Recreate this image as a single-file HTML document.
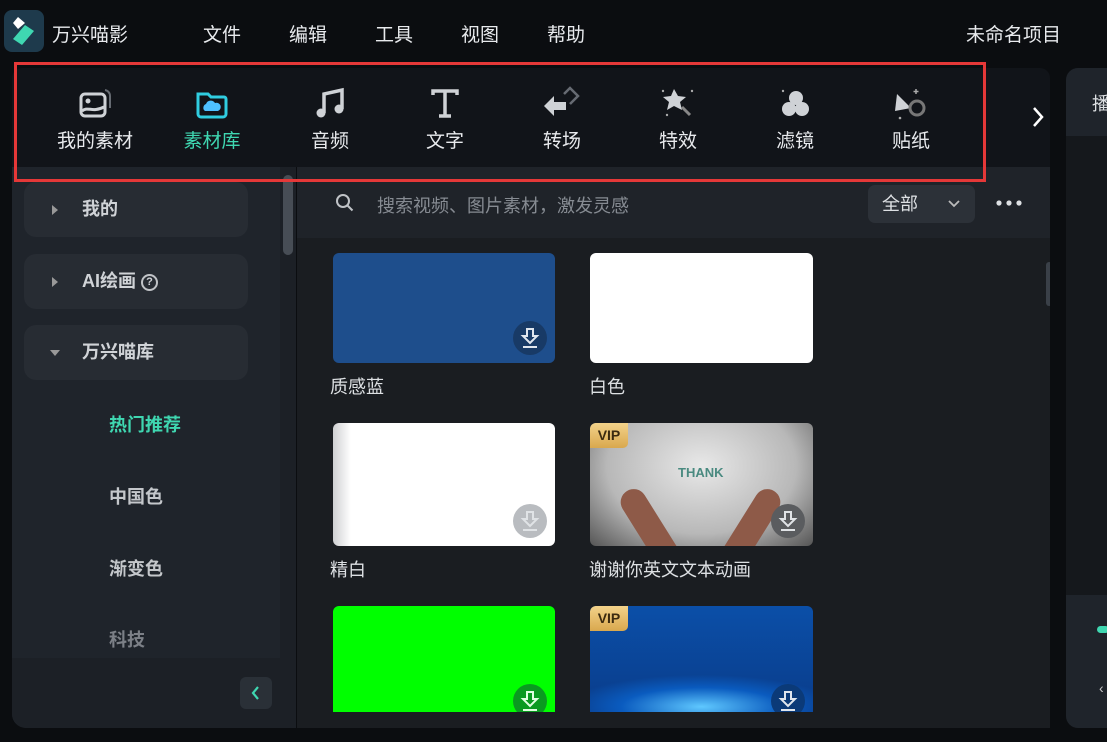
<!DOCTYPE html>
<html><head><meta charset="utf-8"><style>
*{margin:0;padding:0;box-sizing:border-box}
body{width:1107px;height:742px;background:#0b0d10;font-family:"Liberation Sans","Noto Sans CJK SC",sans-serif;color:#e6e8eb;position:relative;overflow:hidden}
.a{position:absolute}
.menu{font-size:19px;top:20px;color:#e8eaed}
.tb{top:68px;left:12px;width:1038px;height:99px;background:#111419;border-radius:10px 10px 0 0}
.tool{position:absolute;top:86px;width:100px;margin-left:-50px;text-align:center;font-size:19px;color:#e8eaed}
.tool svg{display:block;margin:0 auto 6px;height:34px}
.side{left:12px;top:167px;width:284px;height:561px;background:#1f242b;border-radius:0 0 0 14px;overflow:hidden}
.item{position:absolute;left:12px;width:224px;height:55px;background:#272c33;border-radius:12px;font-size:18px;font-weight:bold;color:#d0d3d7;padding-left:58px;line-height:55px}
.tri{position:absolute;left:28px;top:23px;width:0;height:0}
.sub{position:absolute;left:97px;font-size:18px;font-weight:bold;color:#c4c7cb}
.content{left:297px;top:167px;width:753px;height:561px;background:#1a1d21;overflow:hidden}
.th{position:absolute;border-radius:6px;overflow:hidden}
.lab{position:absolute;font-size:18px;color:#dde0e3}
.dl{position:absolute;right:8px;bottom:8px;width:34px;height:34px;border-radius:50%;background:rgba(20,40,70,.75)}
.dl svg{display:block;margin:6px auto}
.vip{position:absolute;left:0;top:0;width:38px;height:25px;background:linear-gradient(#f3d28a,#d9a84e);border-radius:5px 0 5px 0;color:#3b2a10;font-weight:bold;font-size:14px;text-align:center;line-height:25px}
</style></head><body>
<div class="a" style="left:4px;top:10px;width:40px;height:42px;background:#1e3a4c;border-radius:8px"></div>
<svg class="a" style="left:8px;top:13px" width="32" height="36" viewBox="0 0 32 36"><path d="M10 4l7 6-7 6-5-6z" fill="#fff"/><path d="M5 26l12-14 9 6-12 14z" fill="#3fd7b1"/></svg>
<div class="a menu" style="left:52px">万兴喵影</div>
<div class="a menu" style="left:203px">文件</div>
<div class="a menu" style="left:289px">编辑</div>
<div class="a menu" style="left:375px">工具</div>
<div class="a menu" style="left:461px">视图</div>
<div class="a menu" style="left:547px">帮助</div>
<div class="a menu" style="left:966px">未命名项目</div>

<div class="a tb"></div>
<div class="tool" style="left:95px"><svg width="36" viewBox="0 0 36 34"><rect x="4" y="8" width="24" height="22" rx="4" fill="none" stroke="#cfd2d6" stroke-width="3"/><circle cx="11" cy="15" r="2.5" fill="#cfd2d6"/><path d="M5 25c6-5 10 2 22-4" stroke="#cfd2d6" stroke-width="3" fill="none"/><path d="M28 4a6 6 0 0 1 5 6v12" stroke="#666b72" stroke-width="2" fill="none"/></svg>我的素材</div>
<div class="tool" style="left:212px;color:#3fd7b1"><svg width="36" viewBox="0 0 36 34"><path d="M4 8h10l3 3h13a2 2 0 0 1 2 2v15a3 3 0 0 1-3 3H7a3 3 0 0 1-3-3z" fill="none" stroke="#30cde0" stroke-width="3"/><path d="M11 25a4 4 0 0 1 1-7 5 5 0 0 1 9-1 4 4 0 0 1 3 8z" fill="#4ec0ff"/></svg>素材库</div>
<div class="tool" style="left:330px"><svg width="36" viewBox="0 0 36 34"><path d="M12 27V8l18-4v19" stroke="#cfd2d6" stroke-width="3.5" fill="none"/><circle cx="9" cy="27" r="4.5" fill="#cfd2d6"/><circle cx="27" cy="23" r="4.5" fill="#cfd2d6"/></svg>音频</div>
<div class="tool" style="left:445px"><svg width="36" viewBox="0 0 36 34"><path d="M6 9V5h24v4M18 5v25M12 30h12" stroke="#cfd2d6" stroke-width="3.5" fill="none"/></svg>文字</div>
<div class="tool" style="left:562px"><svg width="40" viewBox="0 0 40 34"><path d="M22 8l6-6 8 8-8 8" stroke="#666b72" stroke-width="2.5" fill="none"/><path d="M2 20l10-10v6h12v8H12v6z" fill="#cfd2d6"/></svg>转场</div>
<div class="tool" style="left:678px"><svg width="40" viewBox="0 0 40 34"><path d="M16 3l4 7 8 1-6 5 2 8-8-4-7 4 2-8-6-5 8-1z" fill="#cfd2d6"/><path d="M24 21l8 8" stroke="#888" stroke-width="3"/><circle cx="5" cy="5" r="1.2" fill="#aaa"/><circle cx="34" cy="5" r="1.2" fill="#aaa"/><circle cx="9" cy="29" r="1.2" fill="#aaa"/></svg>特效</div>
<div class="tool" style="left:795px"><svg width="36" viewBox="0 0 36 34"><circle cx="19" cy="12" r="7" fill="#cfd2d6"/><circle cx="12" cy="23" r="7" fill="#cfd2d6"/><circle cx="25" cy="23" r="7" fill="#cfd2d6"/><circle cx="6" cy="5" r="1.2" fill="#aaa"/></svg>滤镜</div>
<div class="tool" style="left:911px"><svg width="40" viewBox="0 0 40 34"><path d="M6 8l14 14-16 3z" fill="#cfd2d6"/><circle cx="26" cy="22" r="7" stroke="#777" stroke-width="3" fill="none"/><path d="M25 3v5M22.5 5.5h5" stroke="#aaa" stroke-width="1.5"/><circle cx="9" cy="32" r="1.3" fill="#aaa"/></svg>贴纸</div>
<svg class="a" style="left:1032px;top:106px" width="12" height="22" viewBox="0 0 12 22"><path d="M2 2l8 9-8 9" stroke="#fff" stroke-width="2.5" fill="none"/></svg>

<div class="a side">
 <div class="item" style="top:15px"><span class="tri" style="border-left:6px solid #999;border-top:5px solid transparent;border-bottom:5px solid transparent"></span>我的</div>
 <div class="item" style="top:87px"><span class="tri" style="border-left:6px solid #999;border-top:5px solid transparent;border-bottom:5px solid transparent"></span>AI绘画 <span style="display:inline-block;width:17px;height:17px;border:2px solid #c0c3c7;border-radius:50%;font-size:11px;line-height:13px;text-align:center;vertical-align:middle">?</span></div>
 <div class="item" style="top:158px"><span class="tri" style="top:25px;left:26px;border-top:6px solid #999;border-left:5px solid transparent;border-right:5px solid transparent"></span>万兴喵库</div>
 <div class="sub" style="top:244px;color:#3fd7b1">热门推荐</div>
 <div class="sub" style="top:316px">中国色</div>
 <div class="sub" style="top:388px">渐变色</div>
 <div class="sub" style="top:459px;color:#7c8087">科技</div>
 <div class="a" style="left:0;top:491px;width:268px;height:70px;background:#1c2026"></div>
 <div class="a" style="left:228px;top:510px;width:32px;height:32px;background:#2a3037;border-radius:6px"></div>
 <svg class="a" style="left:238px;top:518px" width="12" height="16" viewBox="0 0 12 16"><path d="M8 2l-5 6 5 6" stroke="#3fd7b1" stroke-width="2.2" fill="none"/></svg>
 <div class="a" style="left:268px;top:0;width:16px;height:561px;background:#1c2026"></div>
 <div class="a" style="left:271px;top:8px;width:10px;height:80px;background:#474d55;border-radius:5px"></div>
</div>

<div class="a content">
 <div class="a" style="left:0;top:0;width:753px;height:71px;background:#1f2329"></div>
 <svg class="a" style="left:38px;top:26px" width="20" height="20" viewBox="0 0 20 20"><circle cx="8" cy="8" r="6" stroke="#c0c3c7" stroke-width="2" fill="none"/><path d="M12.5 12.5l5 5" stroke="#c0c3c7" stroke-width="2"/></svg>
 <div class="a" style="left:80px;top:25px;font-size:18px;color:#868b92">搜索视频、图片素材，激发灵感</div>
 <div class="a" style="left:571px;top:18px;width:107px;height:38px;background:#2c3138;border-radius:7px;font-size:18px;line-height:38px;padding-left:14px;color:#dde0e3">全部</div>
 <svg class="a" style="left:651px;top:33px" width="12" height="8" viewBox="0 0 12 8"><path d="M1 1l5 5 5-5" stroke="#bbb" stroke-width="1.8" fill="none"/></svg>
 <svg class="a" style="left:698px;top:32px" width="28" height="8" viewBox="0 0 28 8"><circle cx="4" cy="4" r="2.6" fill="#dde0e3"/><circle cx="14" cy="4" r="2.6" fill="#dde0e3"/><circle cx="24" cy="4" r="2.6" fill="#dde0e3"/></svg>
 <div class="a" style="left:749px;top:95px;width:6px;height:44px;background:#3a4048;border-radius:3px"></div>

 <div class="th" style="left:36px;top:86px;width:222px;height:110px;background:#1e4e8c"><div class="dl" style="background:#183a66"><svg width="20" height="22" viewBox="0 0 20 22"><path d="M7 2h6v7h4l-7 7-7-7h4z M3 20h14" stroke="#e0e6ee" stroke-width="2" fill="none"/></svg></div></div>
 <div class="lab" style="left:33px;top:206px">质感蓝</div>
 <div class="th" style="left:293px;top:86px;width:223px;height:110px;background:#fff"></div>
 <div class="lab" style="left:292px;top:206px">白色</div>

 <div class="th" style="left:36px;top:256px;width:222px;height:123px;background:linear-gradient(90deg,#cfd0d2,#fff 8%)"><div class="dl" style="background:#b9bcc0"><svg width="20" height="22" viewBox="0 0 20 22"><path d="M7 2h6v7h4l-7 7-7-7h4z M3 20h14" stroke="#e0e3e6" stroke-width="2" fill="none"/></svg></div></div>
 <div class="lab" style="left:33px;top:389px">精白</div>
 <div class="th" style="left:293px;top:256px;width:223px;height:123px;background:radial-gradient(ellipse at 50% 35%,#e8e8e8,#b8b8b8 60%,#555 100%)">
  <div class="a" style="left:88px;top:42px;font-size:13px;font-weight:bold;color:#4a8a80">THANK</div>
  <div class="a" style="left:45px;top:62px;width:26px;height:80px;background:#8e5a48;border-radius:13px 13px 0 0;transform:rotate(-32deg)"></div>
  <div class="a" style="left:150px;top:62px;width:26px;height:80px;background:#8e5a48;border-radius:13px 13px 0 0;transform:rotate(32deg)"></div>
  <div class="vip">VIP</div>
  <div class="dl" style="background:#5a5c5f"><svg width="20" height="22" viewBox="0 0 20 22"><path d="M7 2h6v7h4l-7 7-7-7h4z M3 20h14" stroke="#e0e3e6" stroke-width="2" fill="none"/></svg></div></div>
 <div class="lab" style="left:292px;top:389px">谢谢你英文文本动画</div>

 <div class="th" style="left:36px;top:439px;width:222px;height:106px;background:#00ff00;border-radius:6px 6px 0 0"><div class="dl" style="bottom:-6px;background:#0a9a20"><svg width="20" height="22" viewBox="0 0 20 22"><path d="M7 2h6v7h4l-7 7-7-7h4z M3 20h14" stroke="#e0ffe0" stroke-width="2" fill="none"/></svg></div></div>
 <div class="th" style="left:293px;top:439px;width:223px;height:106px;background:radial-gradient(ellipse 60% 30% at 50% 95%,#5fc8ff,#0a5bbf 60%,transparent),linear-gradient(#0b4fa8,#0a3c8a);border-radius:6px 6px 0 0"><div class="vip">VIP</div><div class="dl" style="bottom:-6px;background:#0b3a78"><svg width="20" height="22" viewBox="0 0 20 22"><path d="M7 2h6v7h4l-7 7-7-7h4z M3 20h14" stroke="#e0e6ee" stroke-width="2" fill="none"/></svg></div></div>
</div>

<div class="a" style="left:1066px;top:68px;width:41px;height:660px;background:#15181c;border-radius:12px 0 0 12px;overflow:hidden">
 <div class="a" style="left:0;top:0;width:41px;height:68px;background:#1f242b"></div>
 <div class="a" style="left:26px;top:22px;font-size:18px;color:#dde0e3">播</div>
 <div class="a" style="left:0;top:527px;width:41px;height:133px;background:#1f242b"></div>
 <div class="a" style="left:31px;top:558px;width:12px;height:7px;background:#3fd7b1;border-radius:4px"></div>
 <div class="a" style="left:33px;top:612px;font-size:14px;color:#ccc">‹</div>
</div>

<div class="a" style="left:14px;top:62px;width:972px;height:120px;border:3px solid #e53838;z-index:10"></div>
</body></html>
